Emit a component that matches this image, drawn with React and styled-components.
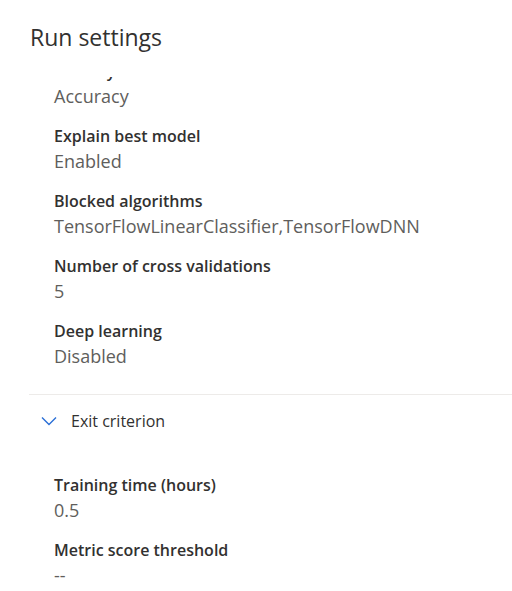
import React from 'react';
import styled, { createGlobalStyle } from 'styled-components';

const GlobalStyle = createGlobalStyle`
  html, body {
    margin: 0;
    padding: 0;
    background: #ffffff;
  }
  body {
    font-family: "Open Sans", "Noto Sans", sans-serif;
    color: #323130;
  }
`;

const Panel = styled.div`
  width: 512px;
  height: 591px;
  display: flex;
  flex-direction: column;
  overflow: hidden;
  background: #ffffff;
`;

const Title = styled.h1`
  margin: 0;
  padding: 22px 0 0 30px;
  height: 77px;
  flex: none;
  box-sizing: border-box;
  font-size: 23px;
  font-weight: 400;
  line-height: 30px;
  color: #323130;
`;

const Scroll = styled.div`
  flex: 1;
  overflow: hidden;
  padding-left: 29px;
`;

const ScrollInner = styled.div`
  margin-top: ${p => p.offset}px;
`;

const Section = styled.div`
  padding-left: 25px;
  display: flex;
  flex-direction: column;
  gap: 15px;
  padding-bottom: ${p => p.bottom || 0}px;
  padding-top: ${p => p.top || 0}px;
`;

const Field = styled.div`
  display: flex;
  flex-direction: column;
`;

const Label = styled.div`
  font-size: 16px;
  font-weight: 600;
  line-height: 24px;
  color: #323130;
  white-space: nowrap;
`;

const Value = styled.div`
  font-size: 18px;
  font-weight: 400;
  line-height: 26px;
  color: #605e5c;
  white-space: nowrap;
`;

const Divider = styled.hr`
  margin: 0;
  border: none;
  border-top: 1px solid #edebe9;
`;

const GroupHeader = styled.div`
  display: flex;
  align-items: center;
  gap: 14px;
  height: 52px;
  padding-left: 12px;
  font-size: 16px;
  color: #323130;
`;

const Chevron = () => (
  <svg width="16" height="10" viewBox="0 0 16 10" fill="none">
    <path d="M1 1.5 L8 8.5 L15 1.5" stroke="#2b6fd6" strokeWidth="1.4" />
  </svg>
);

const runFields = [
  { label: 'Primary metric', value: 'Accuracy' },
  { label: 'Explain best model', value: 'Enabled' },
  { label: 'Blocked algorithms', value: 'TensorFlowLinearClassifier,TensorFlowDNN' },
  { label: 'Number of cross validations', value: '5' },
  { label: 'Deep learning', value: 'Disabled' },
];

const exitFields = [
  { label: 'Training time (hours)', value: '0.5' },
  { label: 'Metric score threshold', value: '--' },
];

export default function App() {
  return (
    <>
      <GlobalStyle />
      <Panel>
        <Title>Run settings</Title>
        <Scroll>
          <ScrollInner offset={-18}>
            <Section bottom={25}>
              {runFields.map(f => (
                <Field key={f.label}>
                  <Label>{f.label}</Label>
                  <Value>{f.value}</Value>
                </Field>
              ))}
            </Section>
            <Divider />
            <GroupHeader>
              <Chevron />
              Exit criterion
            </GroupHeader>
            <Section top={26}>
              {exitFields.map(f => (
                <Field key={f.label}>
                  <Label>{f.label}</Label>
                  <Value>{f.value}</Value>
                </Field>
              ))}
            </Section>
          </ScrollInner>
        </Scroll>
      </Panel>
    </>
  );
}
